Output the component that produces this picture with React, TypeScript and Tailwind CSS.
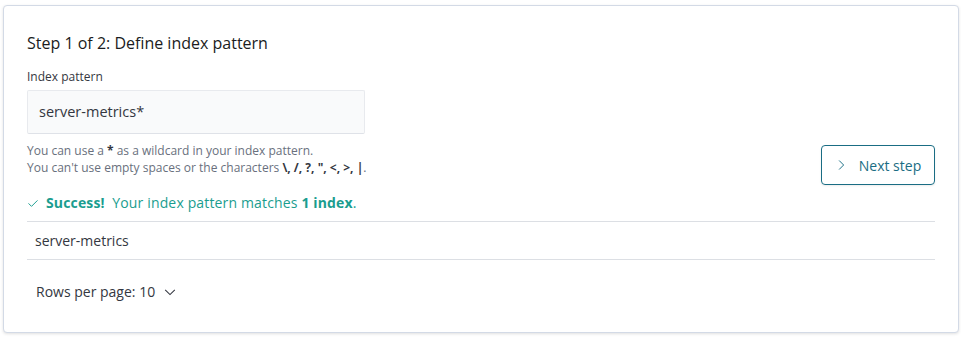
import React from "react";

export default function App() {
  return (
    <div className="w-[961px] h-[337px] bg-white pt-[5px] pl-[3px]" style={{ fontFamily: '"Open Sans", sans-serif' }}>
      <div className="w-[956px] h-[328px] bg-white border border-[#d3dae6] rounded-[4px] shadow-[0_1px_3px_rgba(0,0,0,0.12)] px-[23px] pt-[25px]">
        <div className="flex justify-between items-end">
          <div className="flex flex-col pb-[9px]">
            <h2 className="text-[16px] leading-[24px] text-[#1a1c21]">Step 1 of 2: Define index pattern</h2>
            <label className="mt-[13px] text-[12px] leading-[18px] text-[#343741]">Index pattern</label>
            <div className="mt-[4px] w-[338px] h-[44px] bg-[#f9fafb] border border-[#e8eaee] border-b-[#dfe2e8] rounded-[2px] flex items-center px-[11px] text-[14.5px] text-[#343741]">
              server-metrics*
            </div>
            <div className="mt-[8px] text-[12px] leading-[17px] text-[#69707d]">
              <div>You can use a <b className="text-[#343741]">*</b> as a wildcard in your index pattern.</div>
              <div>
                You can't use empty spaces or the characters <b className="text-[#343741]">\, /, ?, ", &lt;, &gt;, |</b>.
              </div>
            </div>
          </div>
          <button className="w-[114px] h-[40px] border border-[#1a6d84] rounded-[4px] flex items-center justify-center gap-[12px] text-[14px] text-[#1a6d84] shadow-[0_1px_2px_rgba(0,0,0,0.08)]">
            <svg width="12" height="12" viewBox="0 0 16 16" fill="none" stroke="#1a6d84" strokeWidth="1.3">
              <path d="M5.5 2 L11.5 8 L5.5 14" />
            </svg>
            <span>Next step</span>
          </button>
        </div>
        <div className="mt-[8px] flex items-center gap-[7px] text-[14px] leading-[20px] text-[#1a9d8f]">
          <svg width="12" height="12" viewBox="0 0 16 16" fill="none" stroke="#1a9d8f" strokeWidth="1.3">
            <path d="M2 8.5 L6 12.5 L14 4.5" />
          </svg>
          <span className="tracking-[0.15px]">
            <b className="font-bold">Success!</b>&nbsp;&nbsp;Your index pattern matches <b className="font-bold">1 index</b>.
          </span>
        </div>
        <div className="mt-[8px] border-t border-b border-[#dcdfe4] h-[39px] flex items-center px-[8px] text-[14px] text-[#343741]">
          server-metrics
        </div>
        <div className="mt-[22px] flex items-center gap-[8px] px-[9px] text-[14px] leading-[20px] text-[#343741]">
          <span>Rows per page: 10</span>
          <svg width="14" height="14" viewBox="0 0 16 16" fill="none" stroke="#343741" strokeWidth="1.2">
            <path d="M2.5 5.5 L8 11 L13.5 5.5" />
          </svg>
        </div>
      </div>
    </div>
  );
}
